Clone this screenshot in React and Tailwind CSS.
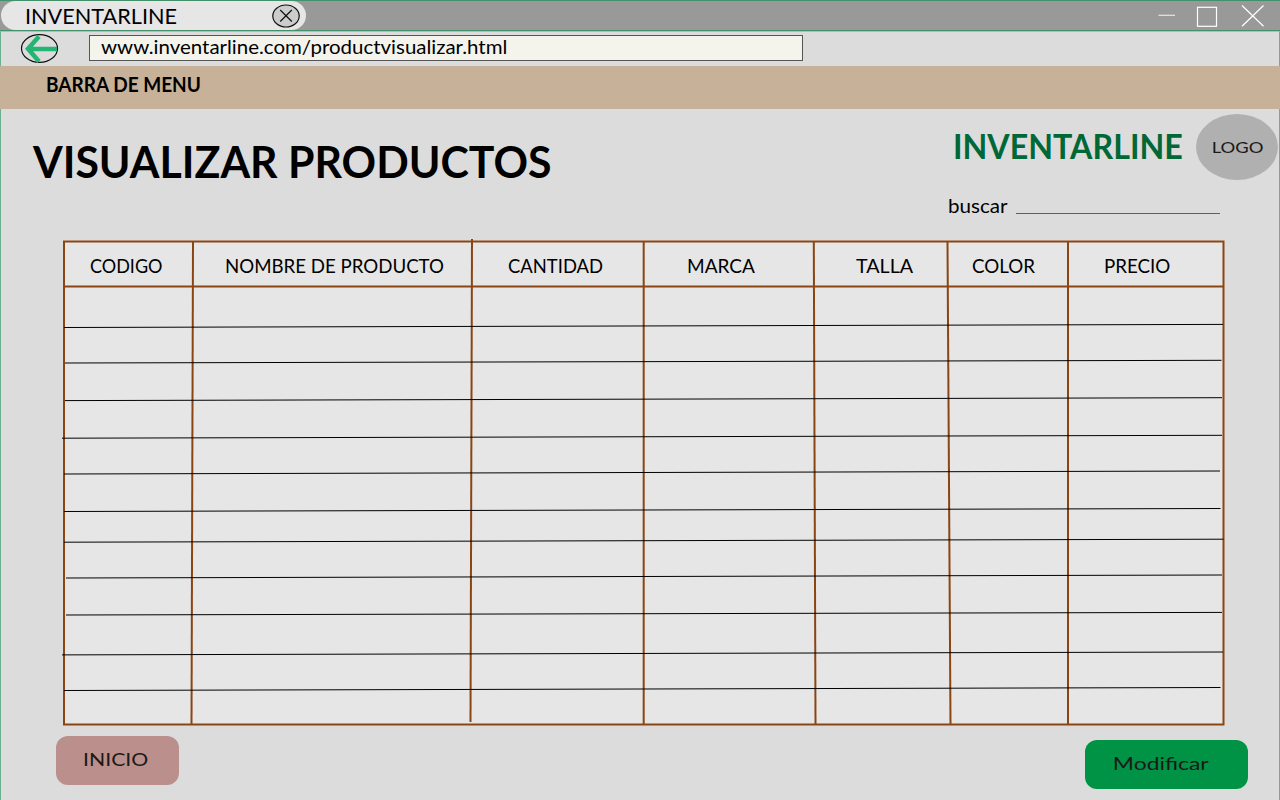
import React from "react";

const columns = [
  { name: "CODIGO", cell: "w-[129px] pl-[25px]", fit: "scale-x-[0.947]" },
  { name: "NOMBRE DE PRODUCTO", cell: "w-[279px] pl-[31px]", fit: "scale-x-[0.982]" },
  { name: "CANTIDAD", cell: "w-[172px] pl-[35px]", fit: "scale-x-[0.97]" },
  { name: "MARCA", cell: "w-[170px] pl-[42px]", fit: "scale-x-100" },
  { name: "TALLA", cell: "w-[134px] pl-[41px]", fit: "scale-x-[1.036]" },
  { name: "COLOR", cell: "w-[120px] pl-[23px]", fit: "scale-x-[0.985]" },
  { name: "PRECIO", cell: "w-[156px] pl-[35px]", fit: "scale-x-[0.985]" },
];

// Slightly uneven rules, in table coordinates: x1, y1, x2, y2
const rowRules = [
  [1, 87.5, 1160, 84.4],
  [2, 123, 1158.5, 120.3],
  [2, 160.6, 1159, 157.7],
  [-1, 198.2, 1159, 195.3],
  [1, 234, 1157, 231],
  [1, 271.5, 1157.5, 268.5],
  [1, 302.2, 1160.5, 299.2],
  [3, 338, 1159, 335],
  [3, 375, 1159, 372.4],
  [-1, 414.9, 1160, 412],
  [1, 450.5, 1157.5, 447.5],
];
const columnRules = [
  [130, 2, 128.5, 484],
  [409, -1, 407.5, 482],
  [580.7, 2, 580.7, 484],
  [750.8, 2, 752.5, 484],
  [884.5, 2, 887.5, 484],
  [1005, 2, 1005, 484],
];

function TitleBar() {
  return (
    <div className="flex h-[31px] items-start justify-between border-y border-[#43906a] bg-[#999999]">
      <div className="ml-px flex h-[29px] w-[305px] items-center justify-between rounded-[15px] bg-[#e6e6e6] pl-[24px] pr-[6px]">
        <span className="origin-left scale-x-[0.985] text-[22px] leading-[29px]">INVENTARLINE</span>
        <svg className="h-6 w-7" viewBox="0 0 28 24" fill="#ccc" stroke="#111" strokeWidth="1.2">
          <ellipse cx="14" cy="12" rx="13.2" ry="11" />
          <path d="M8.200 6 L19.800 17.500 M19.800 6 L8.200 17.500" />
        </svg>
      </div>
      <svg className="mr-4 h-[29px] w-[106px]" viewBox="0 0 106 29" fill="none" stroke="#fff" strokeWidth="1.2">
        <path d="M0.500 14.300 H17" stroke="#e6e6e6" />
        <rect x="39.500" y="6.300" width="19" height="19" />
        <path d="M84 4.500 L105.500 25.300 M105.500 4.500 L84 25.300" />
      </svg>
    </div>
  );
}

function AddressBar() {
  return (
    <div className="flex h-[35px] items-start border-x border-t border-x-[#69b28d] border-t-[#9cc9b0]">
      <svg className="ml-[19px] mt-px h-[31px] w-[39px]" viewBox="0 0 39 31" fill="none">
        <ellipse cx="19.500" cy="15.500" rx="18" ry="13.800" stroke="#111" strokeWidth="1.2" />
        <path d="M37 16 H8 M19 3.500 L8 15.800 L19 28.500" stroke="#22b573" strokeWidth="4.500" />
      </svg>
      <div className="ml-[30px] mt-[3px] flex h-[26px] w-[714px] items-center border border-[#555] bg-[#f4f4ec] pl-[11px]">
        <span className="-mt-1 origin-left scale-x-[1.023] text-[20px] leading-6">www.inventarline.com/productvisualizar.html</span>
      </div>
    </div>
  );
}

export default function App() {
  return (
    <div className="flex h-[800px] w-[1280px] flex-col overflow-hidden bg-[#dcdcdc] font-['Lato',sans-serif] text-black">
      <TitleBar />
      <AddressBar />
      <nav className="flex h-[43px] bg-[#c7b198] pl-[46px] pt-[6px]">
        <span className="origin-left scale-x-[0.951] text-[20px] font-bold leading-6">BARRA DE MENU</span>
      </nav>
      <main className="flex flex-1 flex-col border-x border-[#69b28d]">
        <header className="flex h-[131px] justify-between">
          <h1 className="ml-[32px] mt-[27px] origin-left scale-x-[0.995] whitespace-nowrap text-[43px] font-bold leading-[52px]">
            VISUALIZAR PRODUCTOS
          </h1>
          <div className="flex w-[332px] flex-col">
            <div className="flex h-[76px] items-center pl-[6px]">
              <div className="w-[243px] shrink-0 pb-[2px]">
                <span className="inline-block origin-left scale-x-[0.947] text-[34px] font-bold leading-10 text-[#006837]">
                  INVENTARLINE
                </span>
              </div>
              <div className="flex h-[66px] w-[82px] shrink-0 items-center justify-center rounded-[50%] bg-[#b0b0b0] text-[#1a1a1a]">
                <span className="scale-x-[1.15] text-[16px]">LOGO</span>
              </div>
            </div>
            <label className="flex items-start pl-px pt-[8px]">
              <span className="w-[68px]">
                <span className="inline-block origin-left scale-x-[1.03] text-[20px] leading-6">buscar</span>
              </span>
              <span className="mt-[20px] h-px w-[204px] bg-[#009245]" />
            </label>
          </div>
        </header>
        <section className="relative ml-[62px] h-[485px] w-[1161px] bg-[#e6e6e6] p-0.5">
          <div className="flex h-[46px]">
            {columns.map((c) => (
              <div key={c.name} className={`${c.cell} shrink-0 whitespace-nowrap pt-[12px] text-[19px] leading-6`}>
                <span className={`inline-block origin-left ${c.fit}`}>{c.name}</span>
              </div>
            ))}
          </div>
          <svg
            className="absolute left-0 top-0 h-[485px] w-[1161px] overflow-visible"
            viewBox="0 0 1161 485"
            fill="none"
            stroke="#8b4513"
            strokeWidth="2"
          >
            <rect x="1" y="1.500" width="1159.500" height="483" />
            <path d="M1 46.500 H1160" />
            {columnRules.map(([a, b, c, d]) => (
              <line key={a} x1={a} y1={b} x2={c} y2={d} />
            ))}
            {rowRules.map(([a, b, c, d]) => (
              <line key={b} x1={a} y1={b} x2={c} y2={d} stroke="#000" strokeWidth="1" />
            ))}
          </svg>
        </section>
        <footer className="flex items-start justify-between pl-[55px] pr-[31px] pt-[11px]">
          <button className="h-[49px] w-[123px] rounded-[12px] bg-[#ba8f8c] pb-[2px] pr-[4px] text-[18px] text-[#1a1a1a]">
            <span className="inline-block scale-x-[1.18]">INICIO</span>
          </button>
          <button className="mt-[4px] h-[49px] w-[163px] rounded-[12px] bg-[#009245] pb-[2px] pr-[12px] text-[18px] text-[#1a1a1a]">
            <span className="inline-block scale-x-[1.27]">Modificar</span>
          </button>
        </footer>
      </main>
    </div>
  );
}
